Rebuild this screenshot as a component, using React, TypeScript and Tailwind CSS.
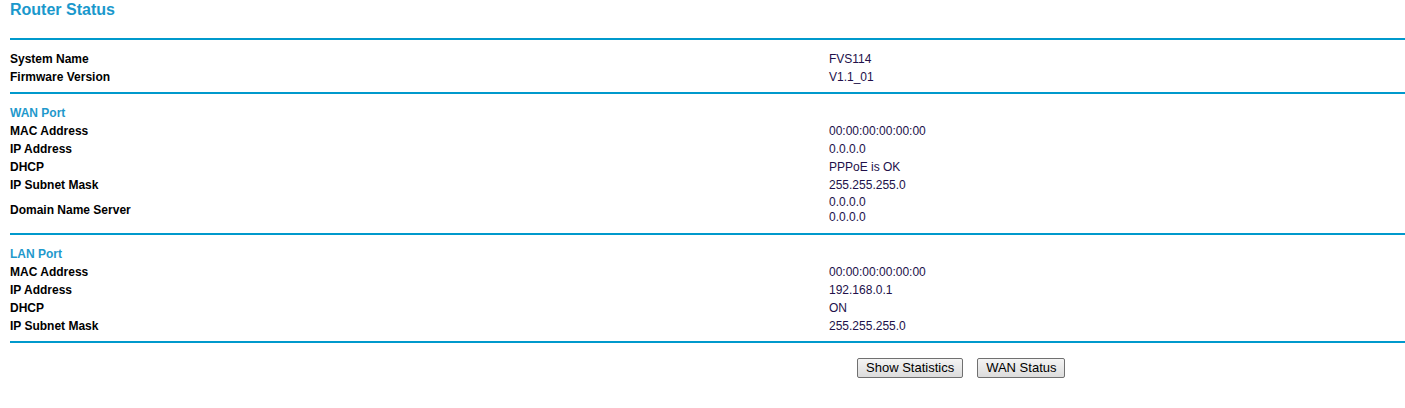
import React from 'react';

type Row = { label: string; values: string[] };

const systemRows: Row[] = [
  { label: 'System Name', values: ['FVS114'] },
  { label: 'Firmware Version', values: ['V1.1_01'] },
];

const wanRows: Row[] = [
  { label: 'MAC Address', values: ['00:00:00:00:00:00'] },
  { label: 'IP Address', values: ['0.0.0.0'] },
  { label: 'DHCP', values: ['PPPoE is OK'] },
  { label: 'IP Subnet Mask', values: ['255.255.255.0'] },
  { label: 'Domain Name Server', values: ['0.0.0.0', '0.0.0.0'] },
];

const lanRows: Row[] = [
  { label: 'MAC Address', values: ['00:00:00:00:00:00'] },
  { label: 'IP Address', values: ['192.168.0.1'] },
  { label: 'DHCP', values: ['ON'] },
  { label: 'IP Subnet Mask', values: ['255.255.255.0'] },
];

const Divider = () => <div className="h-[2px] bg-[#0099cc]" />;

const StatusRow = ({ row }: { row: Row }) => (
  <div className="flex items-center">
    <div className="w-[819px] font-bold text-black leading-[18px]">{row.label}</div>
    <div className={row.values.length > 1 ? 'text-[#22104a] leading-[15px] py-[1px]' : 'text-[#22104a] leading-[18px]'}>
      {row.values.map((v, i) => (
        <div key={i}>{v}</div>
      ))}
    </div>
  </div>
);

const Section = ({ title, rows }: { title?: string; rows: Row[] }) => (
  <div>
    {title && <div className="font-bold text-[#1f99cc] leading-[18px]">{title}</div>}
    {rows.map((r, i) => (
      <StatusRow key={i} row={r} />
    ))}
  </div>
);

export default function App() {
  return (
    <div className="bg-white w-[1405px] h-[408px] pl-[10px] text-[12px] font-['Liberation_Sans',Arial,sans-serif]">
      <h1 className="text-[16px] font-bold text-[#1a98cc] leading-[20px]">Router Status</h1>
      <div className="mt-[18px]">
        <Divider />
      </div>
      <div className="mt-[10px]">
        <Section rows={systemRows} />
      </div>
      <div className="mt-[6px]">
        <Divider />
      </div>
      <div className="mt-[10px]">
        <Section title="WAN Port" rows={wanRows} />
      </div>
      <div className="mt-[7px]">
        <Divider />
      </div>
      <div className="mt-[10px]">
        <Section title="LAN Port" rows={lanRows} />
      </div>
      <div className="mt-[6px]">
        <Divider />
      </div>
      <div className="mt-[15px] flex gap-[14px] pl-[847px]">
        <button className="h-[20px] px-[8px] text-[13px] leading-[16px] text-black border border-[#707070] rounded-[2px] bg-gradient-to-b from-[#f4f4f4] to-[#dcdcdc]">
          Show Statistics
        </button>
        <button className="h-[20px] px-[8px] text-[13px] leading-[16px] text-black border border-[#707070] rounded-[2px] bg-gradient-to-b from-[#f4f4f4] to-[#dcdcdc]">
          WAN Status
        </button>
      </div>
    </div>
  );
}
